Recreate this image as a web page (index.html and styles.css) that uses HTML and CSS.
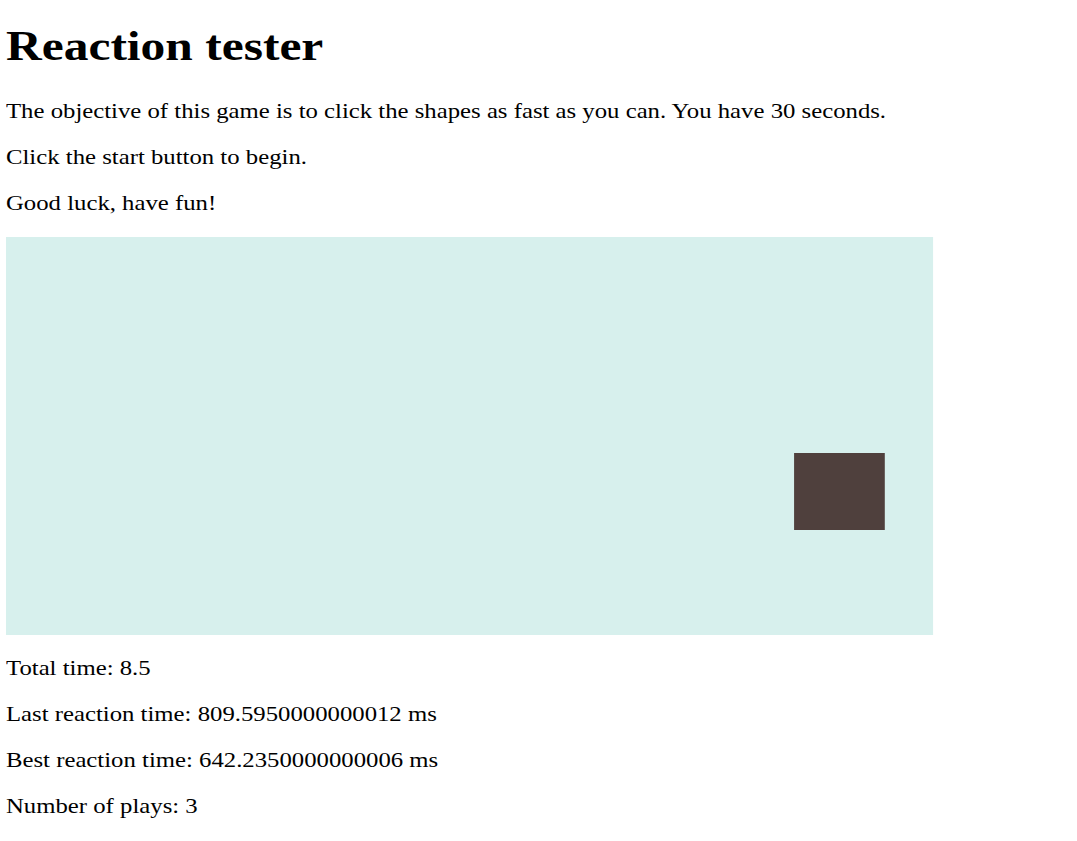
FILE: index.html
```html
<!DOCTYPE html>
<html lang="en">
<head>
<meta charset="utf-8">
<title>Reaction tester</title>
<link rel="stylesheet" href="styles.css">
</head>
<body>
<div class="page">
  <h1 class="title">Reaction tester</h1>
  <p class="text">The objective of this game is to click the shapes as fast as you can. You have 30 seconds.</p>
  <p class="text">Click the start button to begin.</p>
  <p class="text">Good luck, have fun!</p>
  <div class="game">
    <div class="shape" style="left: 669px; top: 216px;"></div>
  </div>
  <p class="text">Total time: 8.5</p>
  <p class="text">Last reaction time: 809.5950000000012 ms</p>
  <p class="text">Best reaction time: 642.2350000000006 ms</p>
  <p class="text">Number of plays: 3</p>
</div>
</body>
</html>
```
FILE: styles.css
```css
html, body {
  background: #ffffff;
}
body {
  margin: 0;
  padding: 0 0 0 6px;
  font-family: "Liberation Serif", "Times New Roman", serif;
  font-size: 21px;
  color: #000000;
  overflow: hidden;
}
.page {
  width: 900px;
  transform: scaleX(1.178);
  transform-origin: 0 0;
  padding-top: 1px;
}
.title {
  font-size: 42px;
  font-weight: bold;
  margin: 21px 0 29px;
}
.text {
  margin: 21px 0;
}
.game {
  position: relative;
  width: 787px;
  height: 398px;
  background: #d7f0ed;
  margin: 20px 0 21px;
}
.shape {
  position: absolute;
  width: 76.5px;
  height: 77px;
  background: #4f403d;
}
```
